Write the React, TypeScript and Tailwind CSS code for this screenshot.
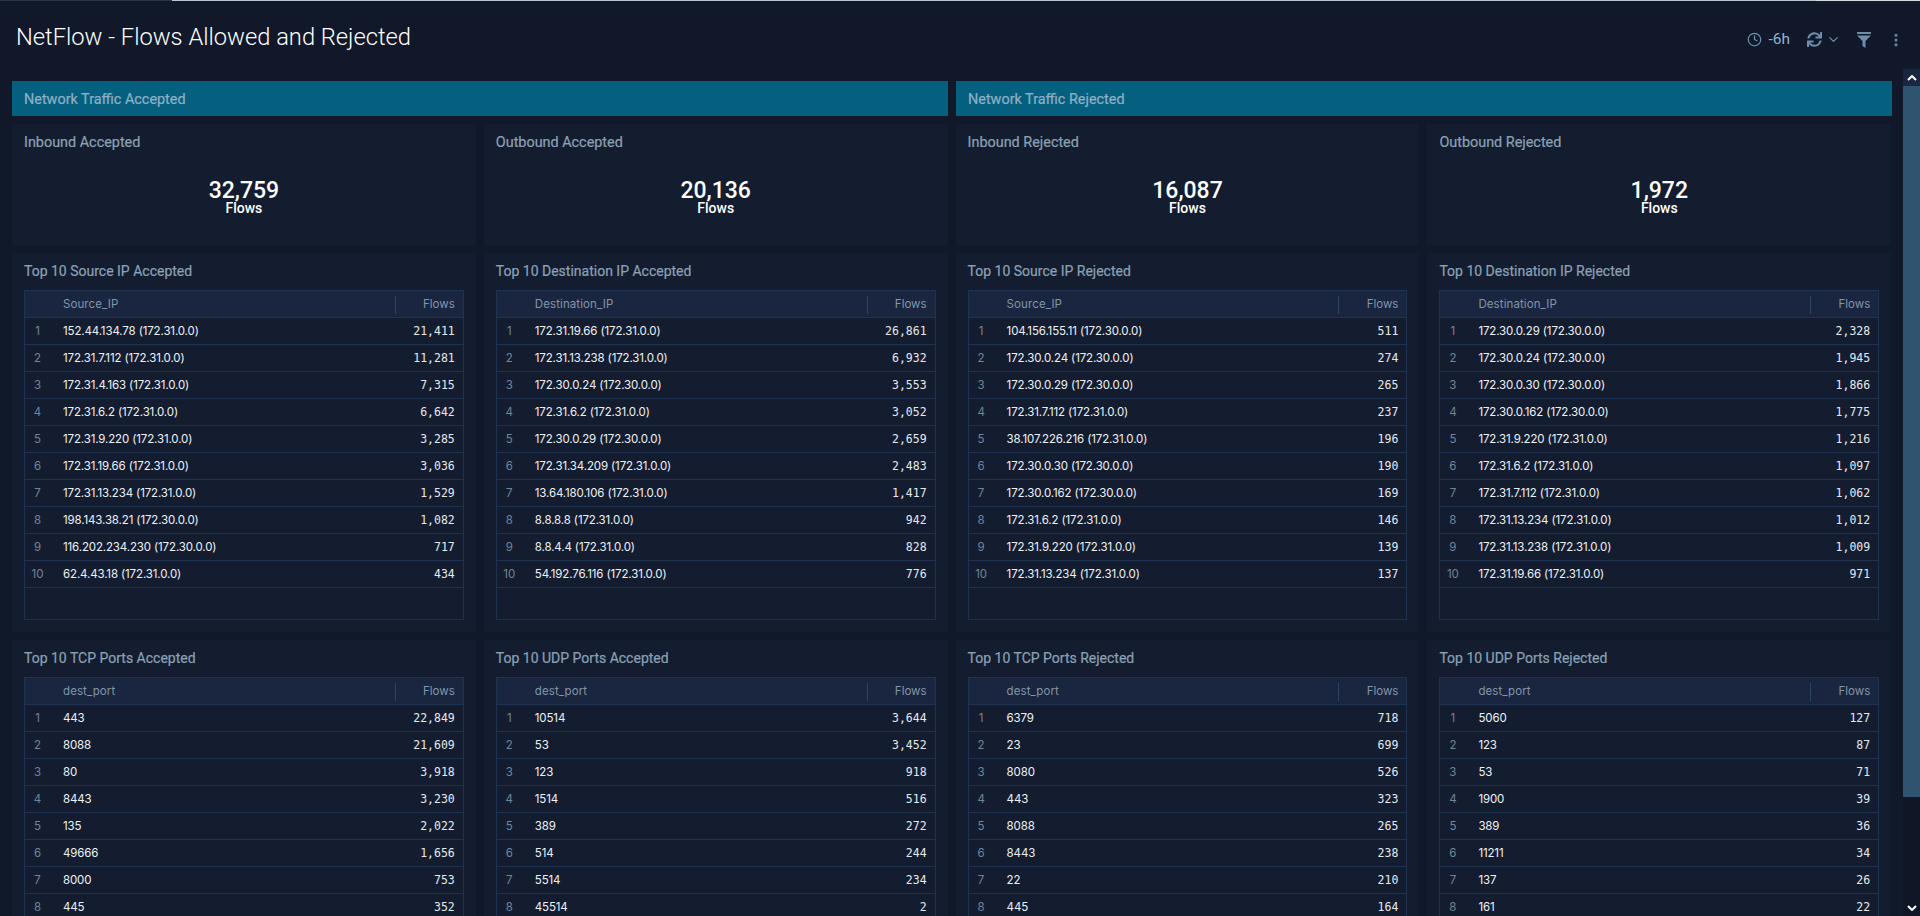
import React from "react";
import { Clock, ChevronDown, EllipsisVertical } from "lucide-react";
import { FaSync } from "react-icons/fa";

type Row = [string, string];

interface TableProps {
  title: string;
  column: string;
  rows: Row[];
  fill?: boolean;
}

const sourceAccepted: Row[] = [
  ["152.44.134.78 (172.31.0.0)", "21,411"],
  ["172.31.7.112 (172.31.0.0)", "11,281"],
  ["172.31.4.163 (172.31.0.0)", "7,315"],
  ["172.31.6.2 (172.31.0.0)", "6,642"],
  ["172.31.9.220 (172.31.0.0)", "3,285"],
  ["172.31.19.66 (172.31.0.0)", "3,036"],
  ["172.31.13.234 (172.31.0.0)", "1,529"],
  ["198.143.38.21 (172.30.0.0)", "1,082"],
  ["116.202.234.230 (172.30.0.0)", "717"],
  ["62.4.43.18 (172.31.0.0)", "434"],
];

const destAccepted: Row[] = [
  ["172.31.19.66 (172.31.0.0)", "26,861"],
  ["172.31.13.238 (172.31.0.0)", "6,932"],
  ["172.30.0.24 (172.30.0.0)", "3,553"],
  ["172.31.6.2 (172.31.0.0)", "3,052"],
  ["172.30.0.29 (172.30.0.0)", "2,659"],
  ["172.31.34.209 (172.31.0.0)", "2,483"],
  ["13.64.180.106 (172.31.0.0)", "1,417"],
  ["8.8.8.8 (172.31.0.0)", "942"],
  ["8.8.4.4 (172.31.0.0)", "828"],
  ["54.192.76.116 (172.31.0.0)", "776"],
];

const sourceRejected: Row[] = [
  ["104.156.155.11 (172.30.0.0)", "511"],
  ["172.30.0.24 (172.30.0.0)", "274"],
  ["172.30.0.29 (172.30.0.0)", "265"],
  ["172.31.7.112 (172.31.0.0)", "237"],
  ["38.107.226.216 (172.31.0.0)", "196"],
  ["172.30.0.30 (172.30.0.0)", "190"],
  ["172.30.0.162 (172.30.0.0)", "169"],
  ["172.31.6.2 (172.31.0.0)", "146"],
  ["172.31.9.220 (172.31.0.0)", "139"],
  ["172.31.13.234 (172.31.0.0)", "137"],
];

const destRejected: Row[] = [
  ["172.30.0.29 (172.30.0.0)", "2,328"],
  ["172.30.0.24 (172.30.0.0)", "1,945"],
  ["172.30.0.30 (172.30.0.0)", "1,866"],
  ["172.30.0.162 (172.30.0.0)", "1,775"],
  ["172.31.9.220 (172.31.0.0)", "1,216"],
  ["172.31.6.2 (172.31.0.0)", "1,097"],
  ["172.31.7.112 (172.31.0.0)", "1,062"],
  ["172.31.13.234 (172.31.0.0)", "1,012"],
  ["172.31.13.238 (172.31.0.0)", "1,009"],
  ["172.31.19.66 (172.31.0.0)", "971"],
];

const tcpAccepted: Row[] = [
  ["443", "22,849"],
  ["8088", "21,609"],
  ["80", "3,918"],
  ["8443", "3,230"],
  ["135", "2,022"],
  ["49666", "1,656"],
  ["8000", "753"],
  ["445", "352"],
];

const udpAccepted: Row[] = [
  ["10514", "3,644"],
  ["53", "3,452"],
  ["123", "918"],
  ["1514", "516"],
  ["389", "272"],
  ["514", "244"],
  ["5514", "234"],
  ["45514", "2"],
];

const tcpRejected: Row[] = [
  ["6379", "718"],
  ["23", "699"],
  ["8080", "526"],
  ["443", "323"],
  ["8088", "265"],
  ["8443", "238"],
  ["22", "210"],
  ["445", "164"],
];

const udpRejected: Row[] = [
  ["5060", "127"],
  ["123", "87"],
  ["53", "71"],
  ["1900", "39"],
  ["389", "36"],
  ["11211", "34"],
  ["137", "26"],
  ["161", "22"],
];

const FlowTable: React.FC<TableProps> = ({ title, column, rows, fill }) => (
  <div className={`bg-[#141d30] px-3 pt-[9px] ${fill ? "h-[379px]" : "h-[300px]"}`}>
    <h3 className="mb-[10px] font-['Roboto',sans-serif] text-[14px] leading-[18px] text-[#8ba1b5] [-webkit-text-stroke:0.2px_#8ba1b5]">
      {title}
    </h3>
    <div className={`border border-[#1f3350] ${fill ? "h-[330px]" : "h-[400px]"}`}>
      <div className="flex h-[27px] items-center border-b border-[#1f3350] bg-[#1a2540] pt-px text-[11.5px] text-[#8296a9]">
        <div className="w-[38px]" />
        <div className="flex-1 tracking-[0.1px]">{column}</div>
        <div className="h-[18px] w-px bg-[#2d4460]" />
        <div className="w-[67px] pr-2 text-right">Flows</div>
      </div>
      {rows.map(([label, flows], i) => (
        <div key={i} className="flex h-[27px] items-center border-b border-[#1f3350] pt-px text-[11.5px]">
          <div className="w-[38px] pr-[13px] text-center text-[#71859a]">{i + 1}</div>
          <div className="flex-1 tracking-[-0.13px] text-[#eef2f6]">{label}</div>
          <div className="pr-2 text-right font-['DejaVu_Sans_Mono',monospace] text-[11.5px] text-[#e4e9ee]">
            {flows}
          </div>
        </div>
      ))}
    </div>
  </div>
);

const Stat: React.FC<{ title: string; value: string }> = ({ title, value }) => (
  <div className="h-[121px] bg-[#141d30] px-3 pt-[9px] font-['Roboto',sans-serif]">
    <h3 className="text-[14.4px] leading-[19px] text-[#8ba1b5] [-webkit-text-stroke:0.2px_#8ba1b5]">{title}</h3>
    <div className="mt-[28px] flex flex-col items-center text-white">
      <div className="text-[23px] font-medium leading-[22px]">{value}</div>
      <div className="text-[14px] font-medium leading-[12px]">Flows</div>
    </div>
  </div>
);

const Section: React.FC<{ title: string }> = ({ title }) => (
  <div className="flex h-[35px] items-center bg-[#056080] pl-3 pt-[2px] font-['Roboto',sans-serif] text-[14.4px] text-[#8fb0c4] [-webkit-text-stroke:0.2px_#8fb0c4]">
    {title}
  </div>
);

const App: React.FC = () => {
  return (
    <div className="flex h-[916px] flex-col overflow-hidden bg-[#10182a] font-['Inter',sans-serif]">
      <div className="flex h-px shrink-0">
        <div className="w-[172px] bg-[#2a3648]" />
        <div className="w-[1644px] bg-[#b9c4cf]" />
        <div className="flex-1 bg-[#d3dbe2]" />
      </div>

      <header className="flex h-[68px] shrink-0 items-start justify-between pl-4 pr-4 pt-[20px]">
        <h1 className="font-['Roboto',sans-serif] text-[23.7px] font-light leading-[32px] text-white">
          NetFlow - Flows Allowed and Rejected
        </h1>
        <div className="flex items-center pt-[7px] text-[#6d8dab]">
          <Clock size={15} strokeWidth={2} />
          <span className="ml-[6px] font-['Roboto',sans-serif] text-[15.5px] text-[#8db2d4]">-6h</span>
          <FaSync size={15} className="ml-[17px]" />
          <ChevronDown size={15} className="ml-[4px]" />
          <svg viewBox="0 0 14 16" className="ml-[16px] h-4 w-[14px]" fill="currentColor">
            <rect x="0" y="0" width="14" height="2" />
            <path d="M0 3.5h14L8.5 9v7l-3-2V9z" />
          </svg>
          <EllipsisVertical size={16} strokeWidth={2.5} className="ml-[17px]" />
        </div>
      </header>

      <div className="flex min-h-0 flex-1">
        <main className="w-[1903px] overflow-hidden pl-3 pr-[11px] pt-3">
          <div className="grid grid-cols-2 gap-2">
            <Section title="Network Traffic Accepted" />
            <Section title="Network Traffic Rejected" />
          </div>
          <div className="mr-[0.8px] mt-2 grid grid-cols-4 gap-2">
            <Stat title="Inbound Accepted" value="32,759" />
            <Stat title="Outbound Accepted" value="20,136" />
            <Stat title="Inbound Rejected" value="16,087" />
            <Stat title="Outbound Rejected" value="1,972" />
            <FlowTable fill title="Top 10 Source IP Accepted" column="Source_IP" rows={sourceAccepted} />
            <FlowTable fill title="Top 10 Destination IP Accepted" column="Destination_IP" rows={destAccepted} />
            <FlowTable fill title="Top 10 Source IP Rejected" column="Source_IP" rows={sourceRejected} />
            <FlowTable fill title="Top 10 Destination IP Rejected" column="Destination_IP" rows={destRejected} />
            <FlowTable title="Top 10 TCP Ports Accepted" column="dest_port" rows={tcpAccepted} />
            <FlowTable title="Top 10 UDP Ports Accepted" column="dest_port" rows={udpAccepted} />
            <FlowTable title="Top 10 TCP Ports Rejected" column="dest_port" rows={tcpRejected} />
            <FlowTable title="Top 10 UDP Ports Rejected" column="dest_port" rows={udpRejected} />
          </div>
        </main>

        {/* scrollbar */}
        <div className="flex w-[17px] flex-col bg-[#0f1726]">
          <div className="flex h-[17px] items-center justify-center bg-[#1a2540]">
            <svg viewBox="0 0 10 6" className="h-[6px] w-[10px]" fill="none" stroke="#fff" strokeWidth="2">
              <path d="M1 5l4-4 4 4" />
            </svg>
          </div>
          <div className="h-[711px] bg-[#305470]" />
          <div className="flex flex-1 items-end justify-center pb-[5px]">
            <svg viewBox="0 0 10 6" className="h-[6px] w-[10px]" fill="none" stroke="#fff" strokeWidth="2">
              <path d="M1 1l4 4 4-4" />
            </svg>
          </div>
        </div>
      </div>
    </div>
  );
};

export default App;
